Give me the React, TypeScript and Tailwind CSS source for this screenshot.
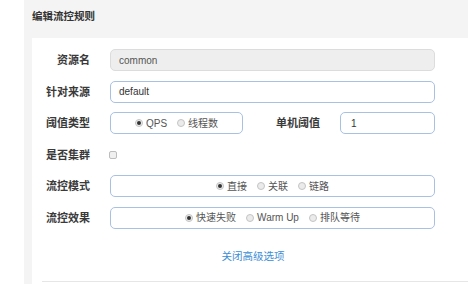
const font = "font-['Liberation_Sans','Noto_Sans_CJK_SC',sans-serif]"

function Radio({ label, checked }: { label: string; checked?: boolean }) {
  return (
    <span className="flex items-center gap-[3px]">
      <span className="w-[8px] h-[8px] rounded-full border border-[#c4c4c4] bg-[#ebebeb] flex items-center justify-center">
        {checked && <span className="w-[4px] h-[4px] rounded-full bg-[#333]" />}
      </span>
      <span>{label}</span>
    </span>
  )
}

function RadioBox({ items, className }: { items: string[]; className: string }) {
  return (
    <div
      className={`${className} h-full rounded-[5px] border border-[#a9c1e0] bg-white flex items-center justify-center gap-[10px] text-[10px] text-[#555]`}
    >
      {items.map((it, i) => (
        <Radio key={it} label={it} checked={i === 0} />
      ))}
    </div>
  )
}

function Label({ children, className = 'w-[58px]' }: { children: string; className?: string }) {
  return (
    <div className={`${className} shrink-0 text-right text-[11px] font-bold text-[#3a3a3a] leading-[22px]`}>
      {children}
    </div>
  )
}

export default function App() {
  return (
    <div className={`w-[468px] h-[284px] bg-white flex overflow-hidden ${font}`}>
      <div className="ml-[24px] flex-1 bg-[#f4f4f4] flex flex-col pl-[8px]">
        {/* Header */}
        <div className="h-[38px] pt-[9px] text-[10.5px] font-bold text-[#333] leading-[14px]">编辑流控规则</div>

        {/* Card */}
        <div className="flex-1 bg-white pt-[11px] flex flex-col">
          <div className="flex flex-col gap-[9.5px]">
            <div className="flex h-[22px] items-center">
              <Label>资源名</Label>
              <div className="ml-[20px] w-[325px] h-full rounded-[5px] border border-[#dcdcdc] bg-[#eeeeee] flex items-center pl-[8px] text-[10px] text-[#555]">
                common
              </div>
            </div>

            <div className="flex h-[22px] items-center">
              <Label>针对来源</Label>
              <div className="ml-[20px] w-[325px] h-full rounded-[5px] border border-[#a9c1e0] bg-white flex items-center pl-[8px] text-[10px] text-[#333]">
                default
              </div>
            </div>

            <div className="flex h-[22px] items-center">
              <Label>阈值类型</Label>
              <div className="ml-[20px] flex h-full">
                <RadioBox className="w-[133px]" items={['QPS', '线程数']} />
                <Label className="w-[77px]">单机阈值</Label>
                <div className="ml-[20px] w-[95px] h-full rounded-[5px] border border-[#a9c1e0] bg-white flex items-center pl-[10px] text-[10px] text-[#333]">
                  1
                </div>
              </div>
            </div>

            <div className="flex h-[22px] items-center">
              <Label>是否集群</Label>
              <div className="ml-[19px] w-[8px] h-[8px] rounded-[2px] border border-[#bdbdbd] bg-[#f0f0f0]" />
            </div>

            <div className="flex h-[22px] items-center">
              <Label>流控模式</Label>
              <div className="ml-[20px] h-full flex">
                <RadioBox className="w-[325px]" items={['直接', '关联', '链路']} />
              </div>
            </div>

            <div className="flex h-[22px] items-center">
              <Label>流控效果</Label>
              <div className="ml-[20px] h-full flex">
                <RadioBox className="w-[325px]" items={['快速失败', 'Warm Up', '排队等待']} />
              </div>
            </div>
          </div>

          <div className="mt-[20.5px] w-[442px] text-center text-[10.5px] leading-[14px] text-[#3c8dd5]">
            关闭高级选项
          </div>

          <div className="mt-[18px] ml-[10px] border-t border-[#e6e6e6]" />
        </div>
      </div>
    </div>
  )
}
